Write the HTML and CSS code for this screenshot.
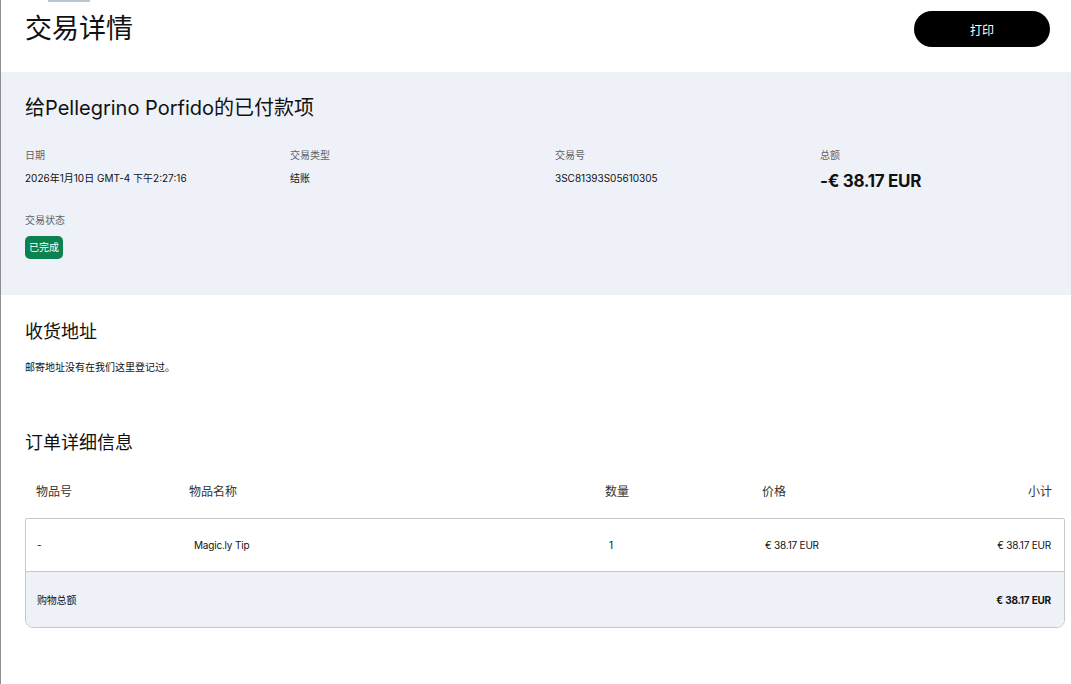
FILE: index.html
```html
<!DOCTYPE html>
<html lang="zh-CN">
<head>
<meta charset="utf-8">
<title>交易详情</title>
<link rel="stylesheet" href="styles.css">
</head>
<body>
<div class="topstrip"></div>
<header class="header">
  <h1 class="title">交易详情</h1>
  <button class="print-btn">打印</button>
</header>

<section class="panel">
  <h2 class="panel-title">给Pellegrino Porfido的已付款项</h2>
  <div class="facts">
    <div class="fact">
      <div class="label">日期</div>
      <div class="value">2026年1月10日 GMT-4 下午2:27:16</div>
    </div>
    <div class="fact">
      <div class="label">交易类型</div>
      <div class="value">结账</div>
    </div>
    <div class="fact">
      <div class="label">交易号</div>
      <div class="value">3SC81393S05610305</div>
    </div>
    <div class="fact">
      <div class="label">总额</div>
      <div class="value total">-€ 38.17 EUR</div>
    </div>
  </div>
  <div class="status">
    <div class="label">交易状态</div>
    <span class="badge">已完成</span>
  </div>
</section>

<section class="section">
  <h3 class="section-title">收货地址</h3>
  <p class="note">邮寄地址没有在我们这里登记过。</p>
</section>

<section class="section order">
  <h3 class="section-title">订单详细信息</h3>
  <div class="thead">
    <div>物品号</div>
    <div>物品名称</div>
    <div>数量</div>
    <div>价格</div>
    <div class="right">小计</div>
  </div>
  <div class="tbox">
    <div class="trow">
      <div>-</div>
      <div class="shift4">Magic.ly Tip</div>
      <div class="shift3">1</div>
      <div class="shift2">€ 38.17 EUR</div>
      <div class="right">€ 38.17 EUR</div>
    </div>
    <div class="trow sum">
      <div class="sum-label">购物总额</div>
      <div></div>
      <div></div>
      <div></div>
      <div class="right strong">€ 38.17 EUR</div>
    </div>
  </div>
</section>
</body>
</html>
```
FILE: styles.css
```css
html, body {
  margin: 0;
  padding: 0;
  background: #ffffff;
}
body {
  border-left: 1px solid #8e8e8e;
  min-height: 684px;
  box-sizing: border-box;
  font-family: Inter, "Noto Sans CJK SC", sans-serif;
  color: #111111;
}
.topstrip {
  margin-left: 47px;
  width: 42px;
  height: 2px;
  background: #b9c5d1;
}
.header {
  height: 54px;
  display: flex;
  align-items: center;
  justify-content: space-between;
  padding: 0 21px 0 24px;
  margin-bottom: 16px;
}
.title {
  margin: 0;
  font-size: 27px;
  font-weight: 400;
  line-height: 32px;
  color: #111;
}
.print-btn {
  width: 136px;
  height: 36px;
  border: none;
  border-radius: 18px;
  background: #000;
  color: #fff;
  font-family: Inter, "Noto Sans CJK SC", sans-serif;
  font-size: 12px;
  font-weight: 400;
}
.panel {
  background: #eef1f8;
  padding: 24px 24px 36px;
}
.panel-title {
  margin: 0;
  font-size: 20px;
  line-height: 24px;
  font-weight: 400;
  color: #111;
}
.facts {
  display: grid;
  grid-template-columns: repeat(4, 265px);
  margin-top: 28px;
}
.label {
  font-size: 10px;
  line-height: 14px;
  color: #5f6368;
}
.value {
  margin-top: 8px;
  font-size: 10px;
  line-height: 16px;
  color: #111;
}
.value.total {
  font-size: 17px;
  line-height: 22px;
  font-weight: 700;
  letter-spacing: -0.3px;
}
.status {
  margin-top: 21px;
}
.badge {
  display: inline-block;
  margin-top: 9px;
  height: 23px;
  line-height: 23px;
  padding: 0 4px;
  border-radius: 5px;
  background: #0b8251;
  color: #fff;
  font-size: 10px;
}
.section {
  padding: 25px 6px 0 24px;
}
.section-title {
  margin: 0;
  font-size: 18px;
  line-height: 24px;
  font-weight: 400;
  color: #111;
}
.note {
  margin: 16px 0 0;
  font-size: 10px;
  line-height: 14px;
  color: #111;
}
.order {
  padding-top: 57px;
}
.thead, .trow {
  display: grid;
  grid-template-columns: 153px 416px 157px 1fr auto;
  align-items: center;
  padding: 0 13px 0 11px;
}
.thead {
  margin-top: 29px;
  margin-bottom: 18px;
  font-size: 12px;
  line-height: 16px;
  color: #333;
}
.tbox {
  border: 1px solid #c8c8c8;
  border-radius: 2px 2px 8px 8px;
  overflow: hidden;
}
.trow {
  height: 52px;
  font-size: 10px;
  letter-spacing: -0.2px;
  color: #111;
}
.trow.sum {
  height: 55px;
  background: #eef1f8;
  border-top: 1px solid #c8c8c8;
}
.right {
  text-align: right;
}
.strong {
  font-weight: 700;
}
.shift4 { padding-left: 4px; }
.shift3 { padding-left: 3px; }
.shift2 { padding-left: 2px; }
```
